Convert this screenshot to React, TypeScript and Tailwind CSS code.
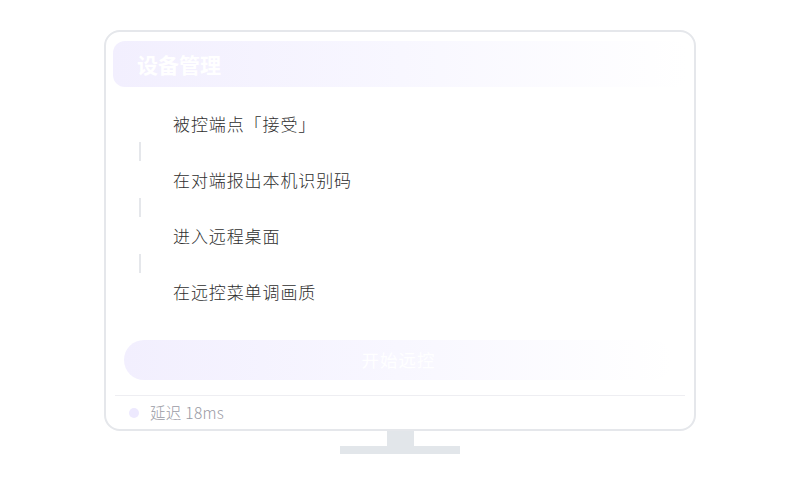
import React from 'react';

const steps = ['被控端点「接受」', '在对端报出本机识别码', '进入远程桌面', '在远控菜单调画质'];

export default function App() {
  return (
    <div
      className="w-[800px] h-[500px] bg-white flex flex-col items-center"
      style={{ fontFamily: '"Noto Sans CJK SC", "Noto Sans", sans-serif' }}
    >
      {/* Monitor frame */}
      <div className="mt-[30px] w-[592px] h-[401px] border-2 border-[#e5e7eb] rounded-[16px] flex flex-col px-[7px] pt-[9px]">
        {/* Header */}
        <div className="h-[46px] rounded-[12px] bg-gradient-to-r from-[#f2effe] via-[#f8f7ff] to-white flex items-center pl-6">
          <span className="text-[21px] font-bold text-white leading-none">设备管理</span>
        </div>

        {/* Steps */}
        <div className="mt-[19px] flex flex-col">
          {steps.map((s, i) => (
            <div key={s} className="flex flex-col">
              <div className="h-[36px] flex items-center pl-[60px] text-[17px] tracking-[0.9px] font-light text-[#2e2e2e]">
                {s}
              </div>
              {i < steps.length - 1 && (
                <div className="h-[20px] pl-[26px]">
                  <div className="w-[2px] h-[19px] bg-[#e5e7eb]" />
                </div>
              )}
            </div>
          ))}
        </div>

        {/* Start button */}
        <div className="mt-[30px] ml-[11px] mr-[14px] h-[40px] rounded-full bg-gradient-to-r from-[#f2effe] via-[#f8f7ff] to-white flex items-center justify-center">
          <span className="text-[17.5px] tracking-[1px] text-white">开始远控</span>
        </div>

        {/* Status */}
        <div className="mt-[15px] mx-[2px] border-t border-[#eeeef2] flex-1 flex items-center pl-[14px] gap-[11px]">
          <span className="w-[10px] h-[10px] rounded-full bg-[#ede9fe]" />
          <span className="text-[15.5px] tracking-[0.3px] font-light text-[#999aa4]">延迟 18ms</span>
        </div>
      </div>

      {/* Stand */}
      <div className="w-[27px] h-[15px] bg-[#e2e6ea]" />
      <div className="w-[120px] h-[8px] bg-[#e2e6ea]" />
    </div>
  );
}
